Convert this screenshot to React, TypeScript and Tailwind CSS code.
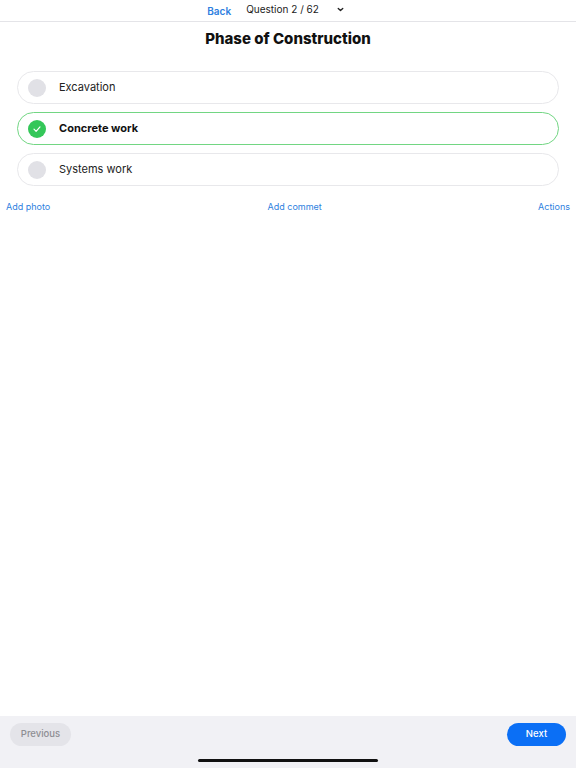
const options = [
  { label: 'Excavation', selected: false },
  { label: 'Concrete work', selected: true },
  { label: 'Systems work', selected: false },
];

export default function App() {
  return (
    <div
      className="flex flex-col w-[576px] h-[768px] bg-white overflow-hidden"
      style={{ fontFamily: 'Inter, "Liberation Sans", sans-serif' }}
    >
      {/* top bar */}
      <div className="flex items-center justify-center h-[22px] border-b border-[#e4e4e8] text-[10px]">
        <span className="w-[38px] text-right mt-[2px] text-[#2f7fe0] font-semibold">Back</span>
        <span className="ml-[15px] text-[#222] mt-[-2px]">Question 2 / 62</span>
        <svg className="ml-[17px] mt-[-2px]" width="9" height="9" viewBox="0 0 10 10" fill="none">
          <path d="M2.5 3.8 5 6.2 7.5 3.8" stroke="#222" strokeWidth="1.5" strokeLinecap="round" strokeLinejoin="round" />
        </svg>
        <span className="w-[38px]" />
      </div>

      <h1 className="mt-[8px] text-center text-[15px] font-extrabold text-[#111] leading-[18px]">
        Phase of Construction
      </h1>

      <div className="flex flex-col gap-[8px] mt-[23px] px-[17px]">
        {options.map(o => (
          <div
            key={o.label}
            className={
              o.selected
                ? 'flex items-center h-[33px] rounded-full border-[1.5px] border-[#72d683] pl-[10px]'
                : 'flex items-center h-[33px] rounded-full border-[1.5px] border-[#e8e8eb] pl-[10px]'
            }
          >
            {o.selected ? (
              <span className="flex items-center justify-center w-[18px] h-[18px] rounded-full bg-[#34c759]">
                <svg width="10" height="10" viewBox="0 0 10 10" fill="none">
                  <path d="M2 5.2 4.1 7.3 8 2.9" stroke="white" strokeWidth="1.2" strokeLinecap="round" strokeLinejoin="round" />
                </svg>
              </span>
            ) : (
              <span className="w-[18px] h-[18px] rounded-full bg-[#e1e1e6]" />
            )}
            <span className={o.selected ? 'ml-[13px] text-[11px] font-bold text-[#111]' : 'ml-[13px] text-[11px] text-[#222]'}>
              {o.label}
            </span>
          </div>
        ))}
      </div>

      <div className="flex justify-between items-center mt-[14px] px-[6px] text-[9px] text-[#2f7fe0]">
        <span>Add photo</span>
        <span className="ml-[1px]">Add commet</span>
        <span>Actions</span>
      </div>

      <div className="flex-1" />

      {/* bottom bar */}
      <div className="flex flex-col h-[52px] bg-[#f1f1f5]">
        <div className="flex justify-between items-center px-[10px] pt-[7px]">
          <button className="h-[23px] w-[61px] rounded-full bg-[#e4e4e9] text-[9.5px] font-medium text-[#8e8e93]">
            Previous
          </button>
          <button className="h-[23px] w-[59px] rounded-full bg-[#0b6ff5] text-[9.5px] font-medium text-white">
            Next
          </button>
        </div>
        <div className="flex justify-center mt-[13px]">
          <div className="w-[180px] h-[3px] rounded-full bg-[#111]" />
        </div>
      </div>
    </div>
  );
}
